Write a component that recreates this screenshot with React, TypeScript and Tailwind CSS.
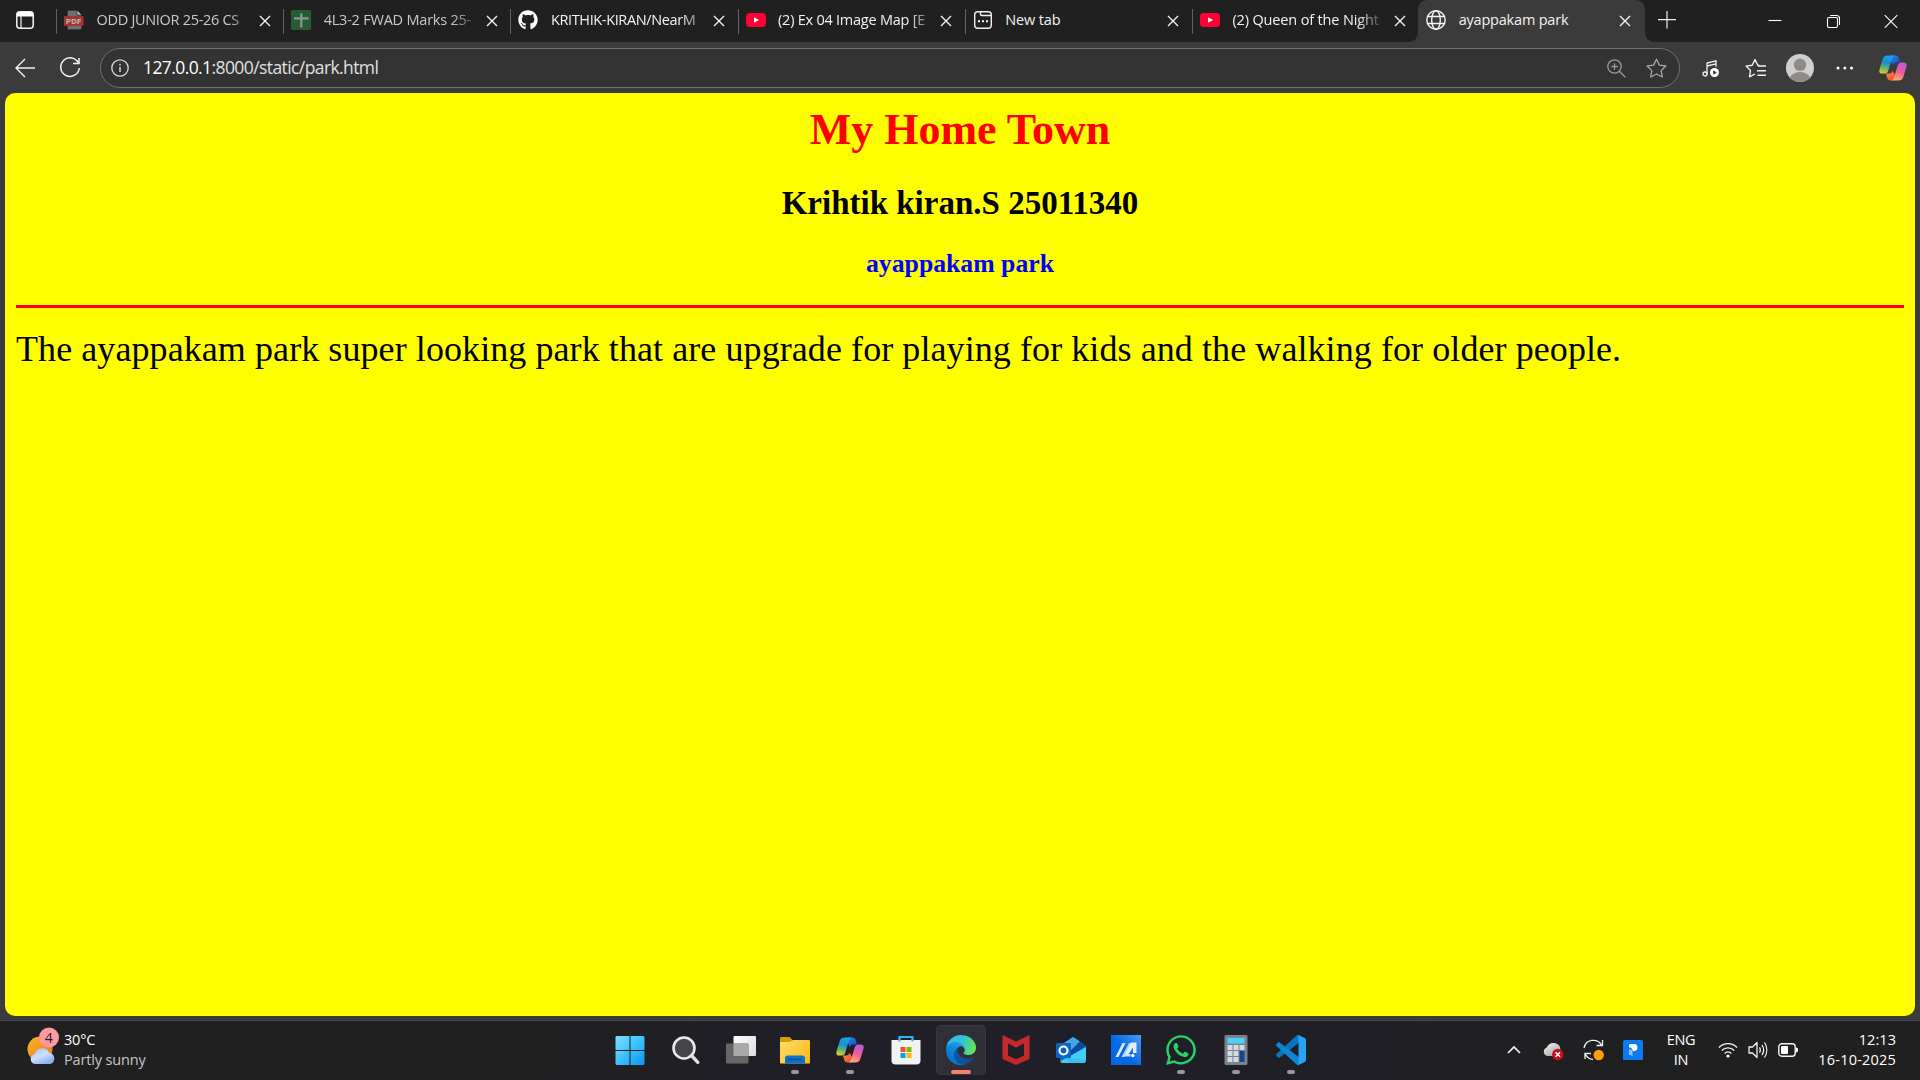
import React from "react";
import { FaGithub, FaWhatsapp } from "react-icons/fa";

type P = { children?: React.ReactNode };

function Svg({ w, h, children, box }: P & { w: number; h: number; box?: string }) {
  return (
    <svg width={w} height={h} viewBox={box ?? `0 0 ${w} ${h}`} fill="none" className="block shrink-0">
      {children}
    </svg>
  );
}

/* ---------- Tab icons ---------- */

const PdfIcon = () => (
  <Svg w={20} h={20}>
    <path d="M3 0h10l5 5v15H3z" fill="#6f6f6f" stroke="#111" strokeWidth="1" />
    <path d="M13 0v5h5z" fill="#bdbdbd" stroke="#111" strokeWidth=".6" />
    <rect x="0" y="6" width="19.5" height="10" rx="1" fill="#a03434" />
    <text x="9.7" y="14" fontSize="7" fontWeight="700" fontFamily="DejaVu Sans" fill="#b9b0b0" textAnchor="middle">PDF</text>
  </Svg>
);
const SheetIcon = () => (
  <Svg w={20} h={20}>
    <rect width="20" height="20" rx="1.5" fill="#275b36" />
    <path d="M10.3 3.5v14M3 8.3h14.5" stroke="#8b9a8e" strokeWidth="2.2" />
  </Svg>
);
const YoutubeIcon = () => (
  <Svg w={20} h={20}>
    <rect y="3" width="20" height="14" rx="3.5" fill="#ff0033" />
    <path d="M8 7.2v5.6l5-2.8z" fill="#fff" />
  </Svg>
);
const NewTabIcon = () => (
  <Svg w={20} h={20}>
    <rect x="1.7" y="1.7" width="16.6" height="16.6" rx="3" stroke="#f0f0f0" strokeWidth="1.4" />
    <path d="M7.5 2v2.2c0 .8.5 1.3 1.3 1.3H18" stroke="#f0f0f0" strokeWidth="1.4" />
    <path d="M5 10.3h2v2H5zM9 10.3h2v2H9zM13 10.3h2v2h-2z" fill="#fff" />
  </Svg>
);
const GlobeIcon = () => (
  <Svg w={20} h={20}>
    <g stroke="#f4f4f4" strokeWidth="1.4">
      <circle cx="10" cy="10" r="9.2" />
      <ellipse cx="10" cy="10" rx="4.3" ry="9.2" />
      <path d="M1.8 6.5h16.4M1.8 13.5h16.4" />
    </g>
  </Svg>
);
const Close = () => (
  <Svg w={12} h={12}>
    <path d="M1 1l10 10M11 1L1 11" stroke="#f3f3f3" strokeWidth="1.4" />
  </Svg>
);

const tabs = [
  { icon: <PdfIcon />, title: "ODD JUNIOR 25-26 CS", dim: true, cls: "tracking-[-0.3px] [mask-image:linear-gradient(90deg,#000_132px,transparent_158px)]" },
  { icon: <SheetIcon />, title: "4L3-2 FWAD Marks 25-", dim: true, cls: "tracking-[-0.22px] [mask-image:linear-gradient(90deg,#000_128px,transparent_158px)]" },
  { icon: <FaGithub size={20} color="#fff" />, title: "KRITHIK-KIRAN/NearM", cls: "tracking-[-0.36px] [mask-image:linear-gradient(90deg,#000_130px,transparent_160px)]" },
  { icon: <YoutubeIcon />, title: "(2) Ex 04 Image Map [E", cls: "tracking-[-0.24px] [mask-image:linear-gradient(90deg,#000_130px,transparent_160px)]" },
  { icon: <NewTabIcon />, title: "New tab", cls: "tracking-[-0.15px]" },
  { icon: <YoutubeIcon />, title: "(2) Queen of the Night", cls: "tracking-[-0.15px] [mask-image:linear-gradient(90deg,#000_126px,transparent_153px)]" },
];

function TabStrip() {
  return (
    <header className="flex h-[42px] bg-[#202020] text-[14.5px] text-[#f2f2f2]">
      <div className="w-[56px] shrink-0 pt-[11px] pl-4">
        <Svg w={18} h={18}>
          <rect x=".8" y=".8" width="16.4" height="16.4" rx="3" stroke="#f3f3f3" strokeWidth="1.5" />
          <path d="M1 3.5C1 2 2 1 3.5 1h11C16 1 17 2 17 3.5V5.5H1z" fill="#fff" />
          <path d="M5 5v12" stroke="#f3f3f3" strokeWidth="1.2" />
        </Svg>
      </div>
      {tabs.map((t, i) => (
        <div key={i} className="flex w-[227.2px] shrink-0">
          <div className="mt-[9px] h-[25px] w-px shrink-0 bg-[#626262]" />
          <div className="mt-[10px] ml-[7px] w-[32.5px] shrink-0">{t.icon}</div>
          <div className={`mt-[9px] h-[22px] w-[154px] shrink-0 leading-[22px] whitespace-nowrap ${t.cls} ${t.dim ? "text-[#c9c9c9]" : ""}`}>
            {t.title}
          </div>
          <div className="mt-[15px] ml-[8px]"><Close /></div>
        </div>
      ))}
      <div className="-ml-[10px] flex h-[42px] w-[9px] shrink-0 bg-[#3b3b3b]">
        <div className="h-full w-full rounded-br-[9px] bg-[#202020]" />
      </div>
      <div className="flex w-[227px] shrink-0 rounded-t-[9px] bg-[#3b3b3b]">
        <div className="mt-[10px] ml-2 w-[32.5px] shrink-0"><GlobeIcon /></div>
        <div className="mt-[9px] w-[160.500px] leading-[22px] tracking-[-0.2px]">ayappakam park</div>
        <div className="mt-[15px]"><Close /></div>
      </div>
      <div className="flex h-[42px] w-[10px] shrink-0 bg-[#3b3b3b]">
        <div className="h-full w-full rounded-bl-[9px] bg-[#202020]" />
      </div>
      <div className="mt-[11px] ml-[3px]">
        <Svg w={18} h={18}><path d="M9 0v17.5M0 8.7h18" stroke="#f0f0f0" strokeWidth="1.2" /></Svg>
      </div>
      <div className="mt-[14px] ml-auto flex gap-[44px] pr-[22px]">
        <Svg w={14} h={14}><path d="M.5 6.5h13" stroke="#fff" strokeWidth="1.1" /></Svg>
        <Svg w={14} h={14}>
          <rect x="1.5" y="3.5" width="10" height="10" rx="1.5" stroke="#fff" strokeWidth="1.1" />
          <path d="M4 1.5h6.5c1.700 0 3 1.300 3 3V11" stroke="#fff" strokeWidth="1.1" />
        </Svg>
        <Svg w={14} h={14}><path d="M.7 1.2l12.6 12.6M13.3 1.2L.7 13.8" stroke="#fff" strokeWidth="1.1" /></Svg>
      </div>
    </header>
  );
}

const Copilot = ({ id }: { id: string }) => (
  <Svg w={28} h={26}>
    <defs>
      <linearGradient id={id + "a"} x1="9" y1="0" x2="4" y2="19" gradientUnits="userSpaceOnUse">
        <stop stopColor="#1aa5ea" /><stop offset=".4" stopColor="#158fd0" /><stop offset=".7" stopColor="#6bb56a" /><stop offset="1" stopColor="#f2cf1c" />
      </linearGradient>
      <linearGradient id={id + "b"} x1="24" y1="7" x2="17" y2="26" gradientUnits="userSpaceOnUse">
        <stop stopColor="#b05ce8" /><stop offset=".5" stopColor="#ee5a94" /><stop offset="1" stopColor="#fdb071" />
      </linearGradient>
      <linearGradient id={id + "c"} x1="14" y1="0" x2="20" y2="8" gradientUnits="userSpaceOnUse">
        <stop stopColor="#1d8fe8" /><stop offset="1" stopColor="#2045c8" />
      </linearGradient>
      <linearGradient id={id + "d"} x1="7" y1="18" x2="13" y2="26" gradientUnits="userSpaceOnUse">
        <stop stopColor="#fa8a35" /><stop offset="1" stopColor="#ee4f39" />
      </linearGradient>
    </defs>
    <path d="M12 .5h4.5c2 0 2.8 1 3.3 2.7L21 7.4h-3.5c-2 0-3 1-3.6 2.8L11 4z" fill={`url(#${id}c)`} />
    <path d="M7 18.5h3.2c2 0 2.8-1 3.4-2.8L17 22l-1.8 3.5h-3.7c-2 0-2.8-1-3.3-2.7z" fill={`url(#${id}d)`} />
    <path d="M8.5.5h7.2c-1.700.4-2.400 1.900-2.900 3.400L9.500 15c-.7 2.300-1.600 3.600-4 3.600H3.200C.7 18.600-.2 17 .5 14.400L3.700 4C4.500 1.500 6 .5 8.500.5z" fill={`url(#${id}a)`} />
    <path d="M19.500 25.500h-7.200c1.700-.4 2.400-1.900 2.900-3.400L18.500 11c.7-2.300 1.600-3.600 4-3.600h2.300c2.500 0 3.400 1.600 2.700 4.200L24.300 22c-.8 2.500-2.300 3.500-4.800 3.500z" fill={`url(#${id}b)`} />
  </Svg>
);

function Toolbar() {
  return (
    <div className="flex h-[51px] items-start bg-[#3b3b3b]">
      <div className="mt-[16px] ml-[15px]">
        <Svg w={20} h={20}><path d="M10 1L1 10l9 9M1 10h19" stroke="#f3f3f3" strokeWidth="1.4" /></Svg>
      </div>
      <div className="mt-[15px] ml-[25px]">
        <Svg w={21} h={22}>
          <path d="M18.500 6.200A9.300 9.300 0 1 0 19.300 11" stroke="#f3f3f3" strokeWidth="1.500" />
          <path d="M19 1v5.500h-6" stroke="#f3f3f3" strokeWidth="1.500" />
        </Svg>
      </div>
      <div className="mt-[6px] ml-[19px] flex h-[40px] w-[1580px] items-center rounded-full border border-[#707070] bg-[#333333] pr-[12px] pl-[10px]">
        <Svg w={18} h={18}>
          <circle cx="9" cy="9" r="8.200" stroke="#d8d8d8" strokeWidth="1.300" />
          <path d="M9 8v5M9 4.800v1.700" stroke="#d8d8d8" strokeWidth="1.500" />
        </Svg>
        <div className="-mt-[2px] ml-[14px] flex-1 text-[17.5px] leading-6 tracking-[-0.590px] text-[#e0e0e0]">
          <span className="text-white">127.0.0.1</span>:8000/static/park.html
        </div>
        <Svg w={19} h={19}>
          <g stroke="#9a9a9a" strokeWidth="1.300"><circle cx="7.500" cy="7.500" r="6.700" /><path d="M12.300 12.300l6 6M4.300 7.500h6.400M7.500 4.300v6.400" /></g>
        </Svg>
        <div className="ml-[20px]">
          <Svg w={21} h={20}>
            <path d="M10.500 1.200l2.900 5.900 6.400.9-4.600 4.600 1.100 6.400-5.800-3-5.800 3 1.100-6.400L1.200 8l6.400-.9z" stroke="#a6a6a6" strokeWidth="1.300" strokeLinejoin="round" />
          </Svg>
        </div>
      </div>
      <div className="mt-[18px] ml-[22px]">
        <Svg w={18} h={18}>
          <g stroke="#f3f3f3" strokeWidth="1.300"><circle cx="3" cy="14" r="2" /><path d="M5 14V3l9-2.200v6M5 6l9-2.200" /></g>
          <circle cx="12.500" cy="12.500" r="4.500" fill="#fff" />
          <path d="M11.200 10.200v4.600l3.600-2.300z" fill="#333" />
        </Svg>
      </div>
      <div className="mt-[16px] ml-[25px]">
        <Svg w={22} h={21}>
          <path d="M14.500 7.500l-1.700-.3L10 1.500 7.200 7.200 1 8.100l4.500 4.500-1 6.200L10 16" stroke="#f3f3f3" strokeWidth="1.400" strokeLinejoin="round" />
          <path d="M13 8h8M12 12.700h9M12.500 17.300h8.500" stroke="#f3f3f3" strokeWidth="1.400" />
        </Svg>
      </div>
      <div className="mt-[12px] ml-[19px]">
        <Svg w={28} h={28}>
          <clipPath id="avatar"><circle cx="14" cy="14" r="14" /></clipPath>
          <g clipPath="url(#avatar)"><rect width="28" height="28" fill="#d0cfcd" /><circle cx="14" cy="10.800" r="6.200" fill="#8f8b88" /><ellipse cx="14" cy="25.500" rx="10.500" ry="7.500" fill="#8f8b88" /></g>
        </Svg>
      </div>
      <div className="mt-[24px] ml-[22px]">
        <Svg w={18} h={4}><circle cx="2" cy="2" r="1.500" fill="#fff" /><circle cx="8.800" cy="2" r="1.500" fill="#fff" /><circle cx="15.500" cy="2" r="1.500" fill="#fff" /></Svg>
      </div>
      <div className="mt-[13px] ml-[25px]"><Copilot id="cp1" /></div>
    </div>
  );
}

/* ---------- Taskbar icons ---------- */

const Windows = () => (
  <Svg w={30} h={30}>
    <defs><linearGradient id="win" x1="0" y1="0" x2="30" y2="30" gradientUnits="userSpaceOnUse"><stop stopColor="#86e0ff" /><stop offset=".5" stopColor="#3cc2fc" /><stop offset="1" stopColor="#0a93f5" /></linearGradient></defs>
    <path d="M1.500 1h13v14h-14V2zM15.500 1h13l1 1v13h-14zM.5 16h14v14h-13l-1-1zM15.500 16h14v13l-1 1h-13z" fill="url(#win)" />
  </Svg>
);
const Search = () => (
  <Svg w={30} h={30}>
    <circle cx="14" cy="13" r="10.500" fill="#45444a" stroke="#e9ebee" strokeWidth="2.600" />
    <path d="M21.500 20.500l6.300 6.800" stroke="#dfe1e4" strokeWidth="3.400" strokeLinecap="round" />
  </Svg>
);
const TaskView = () => (
  <Svg w={32} h={30}>
    <defs><linearGradient id="tv" x1="10" y1="0" x2="32" y2="20" gradientUnits="userSpaceOnUse"><stop stopColor="#fff" /><stop offset="1" stopColor="#dedede" /></linearGradient></defs>
    <rect x="9.500" y="1" width="22.500" height="20" rx="1" fill="url(#tv)" />
    <rect x="2" y="8.500" width="22.500" height="20" rx="1" fill="#666" />
    <rect x="9.500" y="8.500" width="15" height="12.500" fill="#a8a8a8" />
  </Svg>
);
const Folder = () => (
  <Svg w={30} h={30}>
    <defs><linearGradient id="fo" x1="0" y1="5" x2="30" y2="28" gradientUnits="userSpaceOnUse"><stop stopColor="#ffdc6b" /><stop offset="1" stopColor="#fbb813" /></linearGradient></defs>
    <path d="M0 3.500C0 2.500.6 2 1.500 2h8l3 3v6H0z" fill="#d99b05" />
    <path d="M0 7h10l3-2h15.500c1 0 1.500.5 1.500 1.500v21c0 .6-.3 1-1 1H1c-.6 0-1-.4-1-1z" fill="url(#fo)" />
    <path d="M5 28.500V23c0-1.500 1-2.500 2.500-2.500h15c1.500 0 2.500 1 2.500 2.500v5.500z" fill="#0a72c9" />
    <path d="M8.500 24.500h13" stroke="#064a91" strokeWidth="1.300" />
  </Svg>
);
const Store = () => (
  <Svg w={30} h={30}>
    <path d="M8.500 6V2h13v4" stroke="#2fb4f0" strokeWidth="2" />
    <path d="M.5 5h29v20.500c0 2.500-1.500 4-4 4h-21c-2.500 0-4-1.500-4-4z" fill="#f2f2f2" />
    <path d="M8.500 6.500V2.500M21.500 6.500V2.500" stroke="#2fb4f0" strokeWidth="2" />
    <path d="M9.500 12h5v5h-5z" fill="#f25022" /><path d="M15.500 12h5v5h-5z" fill="#7fba00" /><path d="M9.500 18h5v5h-5z" fill="#00a4ef" /><path d="M15.500 18h5v5h-5z" fill="#ffb900" />
  </Svg>
);
const Edge = () => (
  <Svg w={30} h={30} box="0 0 256 256">
    <defs>
      <linearGradient id="e1" x1="60" y1="177" x2="240" y2="177" gradientUnits="userSpaceOnUse"><stop stopColor="#0c59a4" /><stop offset="1" stopColor="#114a8b" /></linearGradient>
      <linearGradient id="e2" x1="120" y1="80" x2="40" y2="235" gradientUnits="userSpaceOnUse"><stop stopColor="#1b9de2" /><stop offset=".5" stopColor="#0a7fd8" /><stop offset="1" stopColor="#0573cf" /></linearGradient>
      <linearGradient id="e3" x1="20" y1="60" x2="250" y2="120" gradientUnits="userSpaceOnUse"><stop stopColor="#35b8ef" /><stop offset=".5" stopColor="#33c4d0" /><stop offset="1" stopColor="#66e650" /></linearGradient>
    </defs>
    <path fill="url(#e1)" d="M231.070 190.540c-3.380 1.760-6.860 3.330-10.420 4.690a101.100 101.100 0 0 1-35.500 6.400c-46.800 0-87.550-32.180-87.550-73.500a31.210 31.210 0 0 1 16.300-27.100C71.600 102.820 60.700 146.960 60.700 172.800c0 73.170 67.400 80.570 81.900 80.570 7.830 0 19.600-2.280 26.700-4.530l1.290-.44a128.350 128.350 0 0 0 66.600-52.800 4 4 0 0 0-5.350-5.700z" />
    <path fill="url(#e2)" d="M105.720 241.400a79.200 79.200 0 0 1-22.700-21.300A80.720 80.720 0 0 1 112.600 101.030c3.120-1.470 8.450-4.120 15.540-4 10.120.08 19.600 4.900 25.660 13a31.900 31.900 0 0 1 6.370 18.700c0-.2 24.430-79.600-80.100-79.600-43.900 0-80 41.660-80 78.210a130.150 130.150 0 0 0 12.110 56 128 128 0 0 0 156.380 67.100 75.550 75.550 0 0 1-62.780-9z" />
    <path fill="url(#e3)" d="M152.330 148.860c-.8 1.050-3.300 2.500-3.300 5.660 0 2.600 1.700 5.120 4.730 7.220 14.460 10.060 41.700 8.730 41.780 8.730a59.850 59.850 0 0 0 30.400-8.350 61.640 61.640 0 0 0 30.430-53.140c.27-22.370-7.970-37.240-11.300-43.840C223.870 23.940 178.280.25 128.700.25A128 128 0 0 0 .7 126.450c.49-36.540 36.800-66.040 80-66.040 3.500 0 23.460.33 42 10.070 16.340 8.580 24.900 18.940 30.840 29.200 6.180 10.670 7.280 24.150 7.280 29.520 0 5.370-2.740 13.330-8.480 19.650z" />
  </Svg>
);
const McAfee = () => (
  <Svg w={30} h={30}>
    <path d="M1.500 0L15 6.500 28.500 0v24L15 30 1.500 24zM7 8.500V20.500l8 3.700 8-3.700V8.500l-8 4z" fill="#c5282b" fillRule="evenodd" />
  </Svg>
);
const Outlook = () => (
  <Svg w={30} h={30}>
    <path d="M4 11L17 2l13 9v14c0 1.800-1 3-3 3H7c-2 0-3-1.200-3-3z" fill="#1a68bf" />
    <path d="M5 10L17 2l7 4.500L14 17z" fill="#45a7ea" />
    <path d="M24 6.500l6 4.500-18 12v-5z" fill="#0b46a0" />
    <path d="M30 12v13c0 1.800-1 3-3 3H7c-1.200 0-2.300-.6-2.800-1.500z" fill="#3fd0f5" />
    <path d="M30 25c0 1.800-1 3-3 3H14l-6-6z" fill="#2bb3ee" opacity=".5" />
    <rect x="0" y="8" width="15" height="15" rx="1.200" fill="#0b66c3" />
    <circle cx="7.500" cy="15.500" r="4" stroke="#fff" strokeWidth="2.200" />
  </Svg>
);
const MyAsus = () => (
  <Svg w={30} h={30}>
    <defs><linearGradient id="as" x1="12" y1="15" x2="30" y2="0" gradientUnits="userSpaceOnUse"><stop stopColor="#0268e3" /><stop offset="1" stopColor="#5099fb" /></linearGradient></defs>
    <rect width="30" height="30" fill="url(#as)" />
    <path d="M4.500 22L11.500 8h3L7.500 22z" fill="#dcebff" />
    <path d="M10.500 22L18 8h2.500L13.500 22z" fill="#b9d5fd" />
    <path d="M20 7.500h5.500V18H22v-5.500L17.500 19h-3z" fill="#e4effe" />
    <path d="M14.500 19h5v2.500h-6z" fill="#cfe2fd" />
    <circle cx="21.800" cy="20.500" r="1.700" fill="#fff" />
  </Svg>
);
const Calculator = () => (
  <Svg w={30} h={30}>
    <rect x="3.500" y="0" width="23" height="30" rx="1.500" fill="#7b828b" />
    <rect x="6.500" y="3" width="17" height="5.500" fill="#45d3f8" />
    <path d="M6.500 10h5v5h-5zM12.500 10h5v5h-5zM18.500 10h5v5h-5zM6.500 16h5v5h-5zM12.500 16h5v5h-5zM6.500 22h5v5h-5zM12.500 22h5v5h-5z" fill="#d3d9e0" />
    <rect x="18.500" y="16" width="5" height="11" fill="#10498f" />
  </Svg>
);
const VSCode = () => (
  <Svg w={30} h={30} box="0 0 100 100">
    <path fill="#0a74bd" d="M96.460 10.800L75.860.88C73.470-.27 70.620.21 68.750 2.080L1.300 63.580c-1.810 1.660-1.810 4.510 0 6.170l5.510 5c1.490 1.350 3.720 1.450 5.320.24L93.360 13.370C96.090 11.300 100 13.250 100 16.670v-.24c0-2.400-1.380-4.590-3.540-5.630z" />
    <path fill="#0f84cf" d="M96.460 89.200L75.860 99.120c-2.390 1.150-5.240.67-7.110-1.200L1.300 36.420c-1.810-1.660-1.810-4.510 0-6.170l5.510-5c1.490-1.350 3.720-1.450 5.320-.24L93.360 86.630C96.090 88.700 100 86.750 100 83.330v.24c0 2.400-1.380 4.590-3.540 5.630z" />
    <path fill="#27a4f4" d="M75.860 99.130c-2.390 1.150-5.240.66-7.110-1.210C71.060 100.220 75 98.590 75 95.330V4.670C75 1.410 71.060-.22 68.750 2.080 70.620.21 73.470-.27 75.860.87l20.600 9.910c2.160 1.040 3.540 3.230 3.540 5.630v67.180c0 2.400-1.380 4.590-3.540 5.630z" />
  </Svg>
);

const apps: { el: React.ReactNode; dot?: boolean; active?: boolean }[] = [
  { el: <Windows /> },
  { el: <Search /> },
  { el: <TaskView /> },
  { el: <Folder />, dot: true },
  { el: <Copilot id="cp2" />, dot: true },
  { el: <Store /> },
  { el: <Edge />, active: true },
  { el: <McAfee /> },
  { el: <Outlook /> },
  { el: <MyAsus /> },
  { el: <FaWhatsapp size={34} color="#25d366" />, dot: true },
  { el: <Calculator />, dot: true },
  { el: <VSCode />, dot: true },
];

function Taskbar() {
  return (
    <footer className="flex h-[60px] border-t border-[#454545] bg-[linear-gradient(90deg,#202020_0%,#202020_25%,#201f27_42%,#201f27_65%,#202020_90%)] text-[14.5px] text-white">
      <div className="flex w-[602.500px] shrink-0 pl-[27px]">
        <div className="mt-[6px]">
          <Svg w={33} h={38}>
            <defs>
              <linearGradient id="sun" x1="2" y1="10" x2="22" y2="32" gradientUnits="userSpaceOnUse"><stop stopColor="#f5b62b" /><stop offset="1" stopColor="#f57812" /></linearGradient>
              <linearGradient id="cl" x1="10" y1="20" x2="18" y2="37" gradientUnits="userSpaceOnUse"><stop stopColor="#9fc0f5" /><stop offset=".5" stopColor="#cfe0fb" /><stop offset="1" stopColor="#8db2f0" /></linearGradient>
            </defs>
            <circle cx="13" cy="22" r="12.500" fill="url(#sun)" />
            <path d="M8 37a5 5 0 0 1-.5-9.800A8 8 0 0 1 22.500 26a5.600 5.600 0 0 1 .5 11z" fill="url(#cl)" />
            <circle cx="22" cy="10.500" r="10" fill="#ff9aa2" />
            <text x="21.800" y="15.600" fontSize="14" fontFamily="Open Sans" textAnchor="middle" fill="#1c1c1c">4</text>
          </Svg>
        </div>
        <div className="mt-[9px] ml-[4px] leading-[20px]">
          <div className="tracking-[-0.200px]">30°C</div>
          <div className="tracking-[-0.15px] text-[#c6c6c6]">Partly sunny</div>
        </div>
      </div>
      {apps.map((a, i) => (
        <div key={i} className="flex w-[55.100px] shrink-0 justify-center pt-[4px]">
          <div className={`flex h-[50px] w-[50px] flex-col items-center rounded-[5px] ${a.active ? "bg-[#302f37] ring-1 ring-[#39383f] ring-inset" : ""}`}>
            <div className="mt-[8px] flex h-[34px] items-center">{a.el}</div>
            {a.dot && <div className="mt-[3px] h-[4px] w-[8px] rounded-full bg-[#98979b]" />}
            {a.active && <div className="mt-[3px] h-[4px] w-[20px] rounded-full bg-[#f6826a]" />}
          </div>
        </div>
      ))}
      <div className="flex flex-1 items-start justify-end pr-[24px]">
        <div className="mt-[24px]"><Svg w={14} h={9}><path d="M1 8l6-6 6 6" stroke="#f3f3f3" strokeWidth="1.700" /></Svg></div>
        <div className="mt-[20px] ml-[22px]">
          <Svg w={21} h={20}>
            <defs><linearGradient id="od" x1="4" y1="2" x2="12" y2="16" gradientUnits="userSpaceOnUse"><stop stopColor="#f1f1f1" /><stop offset="1" stopColor="#a0a0a0" /></linearGradient></defs>
            <path d="M4.500 15A4.400 4.400 0 0 1 3.800 6.500 7.300 7.300 0 0 1 17 6c1 3 0 6-2 9z" fill="url(#od)" />
            <circle cx="14.800" cy="13.500" r="5.700" fill="#c50f1f" />
            <path d="M12.600 11.300l4.400 4.400M17 11.300l-4.400 4.400" stroke="#fff" strokeWidth="1.600" />
          </Svg>
        </div>
        <div className="mt-[18px] ml-[19px]">
          <Svg w={22} h={22}>
            <path d="M1 9A9.500 9.500 0 0 1 18.500 6M19.500 1v5.500h-6M2 20v-5.500h6M2.500 15.500A9.500 9.500 0 0 0 10 20.500" stroke="#f0f0f0" strokeWidth="1.300" />
            <circle cx="15.700" cy="16" r="5.200" fill="#ff9d0a" />
          </Svg>
        </div>
        <div className="mt-[19px] ml-[18px]">
          <Svg w={20} h={20}>
            <rect width="20" height="20" rx="1.500" fill="#0b7bf2" />
            <path d="M7 4h4c2.300 0 3.500 1.500 3.500 3.500 0 2-1.300 3.500-3.500 3.500H9.500V9.300L7.500 7.500H6V5z" fill="#fff" />
            <path d="M6 9.500h2l1.500 1.500v5.500L8 15H6z" fill="#8fc2fb" />
          </Svg>
        </div>
        <div className="mt-[9px] ml-[22px] w-[32px] text-center leading-[20px] tracking-[-0.3px] whitespace-nowrap"><div>ENG</div><div>IN</div></div>
        <div className="mt-[20px] ml-[21px]">
          <Svg w={20} h={17}>
            <path d="M1 6.500a12.500 12.500 0 0 1 18 0M3.800 9.500a8.600 8.600 0 0 1 12.400 0M6.700 12.400a4.700 4.700 0 0 1 6.600 0" stroke="#f3f3f3" strokeWidth="1.400" />
            <circle cx="10" cy="15" r="1.600" fill="#fff" />
          </Svg>
        </div>
        <div className="mt-[19px] ml-[10px]">
          <Svg w={20} h={20}>
            <path d="M1 7h3.500L9 2.500v15L4.500 13H1z" stroke="#f3f3f3" strokeWidth="1.300" strokeLinejoin="round" />
            <path d="M11.500 7.300c1 1.700 1 3.700 0 5.400M14 5c2 3 2 7 0 10M16.500 2.500c3 4.500 3 10.500 0 15" stroke="#f3f3f3" strokeWidth="1.300" />
          </Svg>
        </div>
        <div className="mt-[22px] ml-[10px]">
          <Svg w={20} h={14}>
            <rect x=".8" y=".8" width="16.400" height="12.400" rx="3" stroke="#f3f3f3" strokeWidth="1.400" />
            <rect x="3" y="3" width="7" height="8" rx="1" fill="#fff" />
            <path d="M18 4.500c1.300 0 2 .8 2 2.500s-.7 2.500-2 2.500z" fill="#fff" />
          </Svg>
        </div>
        <div className="mt-[9px] ml-[18px] w-[80px] text-right leading-[20px] whitespace-nowrap">
          <div className="tracking-[0.050px]">12:13</div>
          <div className="tracking-[0.200px]">16-10-2025</div>
        </div>
      </div>
    </footer>
  );
}

export default function App() {
  return (
    <div className="flex h-[1080px] w-[1920px] flex-col overflow-hidden bg-[#3b3b3b] font-['Open_Sans',sans-serif]">
      <TabStrip />
      <Toolbar />
      <main className="mx-[5px] mb-[4px] min-h-0 flex-1 rounded-[10px] bg-[#ffff00] px-[11px] pt-[12px] font-['Liberation_Serif',serif]">
        <h1 className="text-center text-[44px] leading-[50px] font-bold text-[#ff0000]">My Home Town</h1>
        <h2 className="mt-[29px] text-center text-[33px] leading-[38px] font-bold text-black">Krihtik kiran.S 25011340</h2>
        <h3 className="mt-[27px] text-center text-[25.740px] leading-[30px] font-bold text-[#0000ff]">ayappakam park</h3>
        <div className="mt-[26px] h-[3px] bg-[#ff0000]" />
        <p className="mt-[20px] text-[36px] leading-[42px] tracking-[0.080px] whitespace-nowrap text-black">
          The ayappakam park super looking park that are upgrade for playing for kids and the walking for older people.
        </p>
      </main>
      <Taskbar />
    </div>
  );
}
